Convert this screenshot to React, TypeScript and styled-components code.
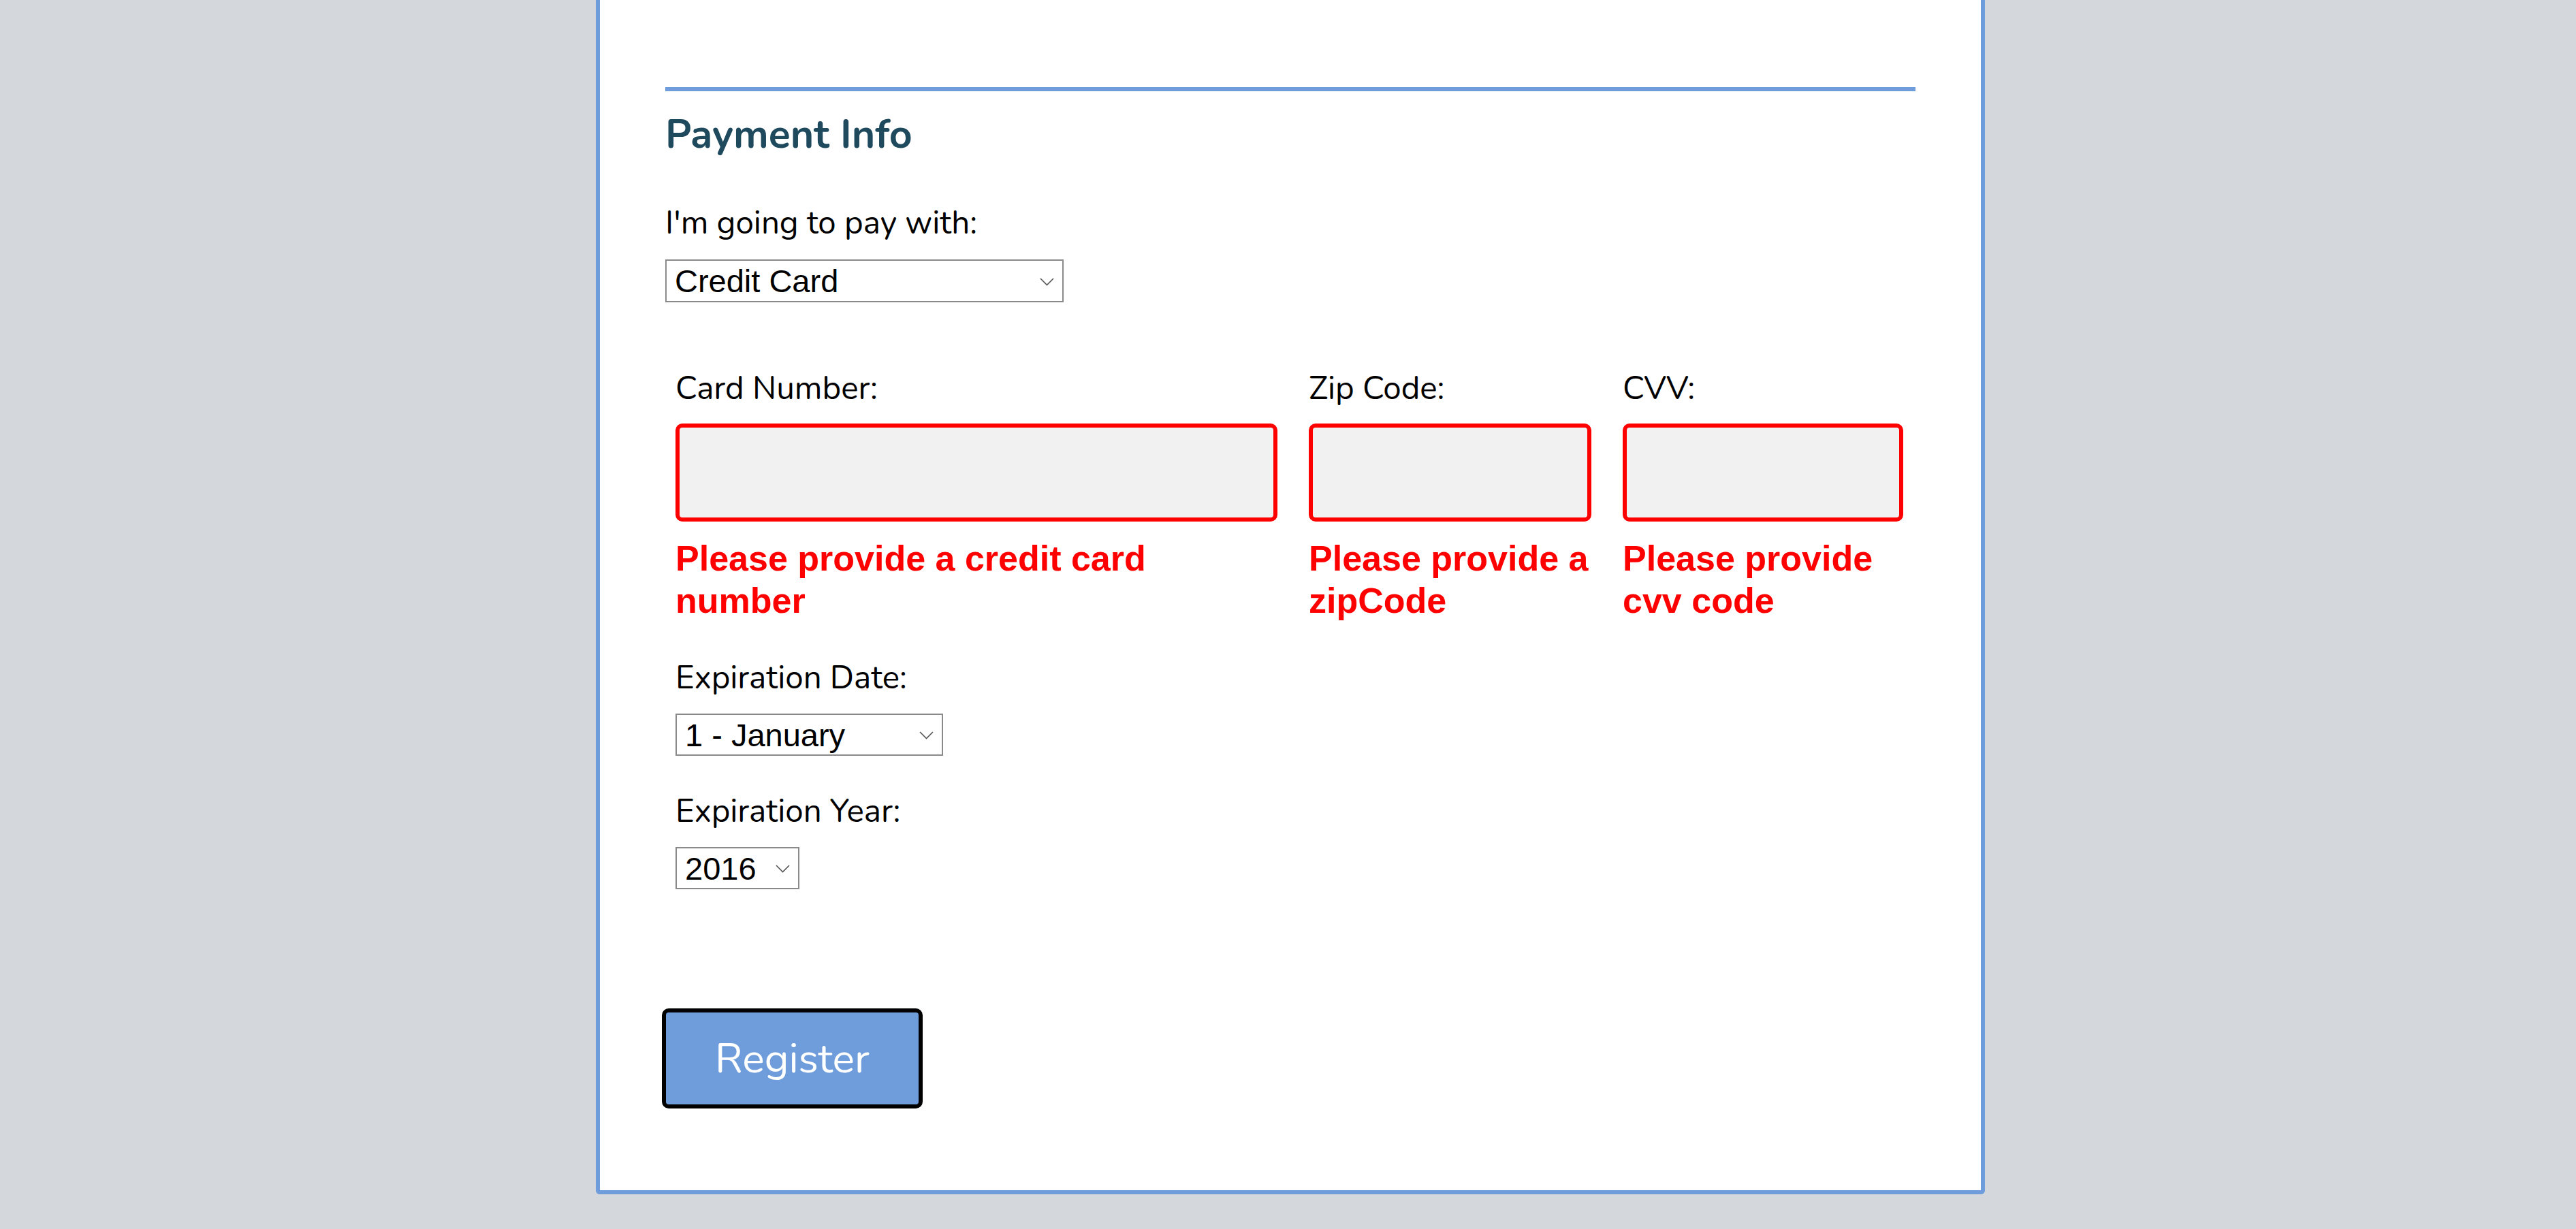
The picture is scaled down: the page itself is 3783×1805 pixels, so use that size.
import React from "react";
import styled, { createGlobalStyle } from "styled-components";

const GlobalStyle = createGlobalStyle`
  html, body {
    margin: 0;
    padding: 0;
    background: #d4d7dc;
  }
  body {
    font-family: "Nunito", Lato, "Liberation Sans", sans-serif;
    color: #000;
  }
  * { box-sizing: border-box; }
`;

const Page = styled.div`
  min-height: 100vh;
  display: flex;
  justify-content: center;
  align-items: flex-start;
  padding-left: 7px;
  background: #d4d7dc;
`;

const Card = styled.form`
  width: 2040px;
  background: #fff;
  border: 6px solid #6f9ddb;
  border-top: none;
  border-radius: 0 0 6px 6px;
  padding: 128px 96px 120px;
`;

const Section = styled.section`
  border-top: 6px solid #6f9ddb;
  display: flex;
  flex-direction: column;
  align-items: flex-start;
`;

const Title = styled.h2`
  margin: 31px 0 0;
  font-size: 59px;
  line-height: 66px;
  font-weight: 700;
  color: #1f4a5e;
`;

const Field = styled.div<{ $mt?: number; $gap?: number }>`
  display: flex;
  flex-direction: column;
  align-items: flex-start;
  margin-top: ${(p) => p.$mt ?? 0}px;
  gap: ${(p) => p.$gap ?? 26}px;
`;

const Label = styled.label`
  font-size: 47.5px;
  line-height: 53px;
  font-weight: 400;
  color: #000;
`;

const SelectBox = styled.div<{ $w: number; $h: number }>`
  position: relative;
  width: ${(p) => p.$w}px;
  height: ${(p) => p.$h}px;
`;

const Select = styled.select`
  appearance: none;
  -webkit-appearance: none;
  width: 100%;
  height: 100%;
  margin: 0;
  border: 2px solid #8a8a8a;
  border-radius: 0;
  background: #fff;
  padding: 0 0 0 12px;
  font-family: "Liberation Sans", Arial, sans-serif;
  font-size: 47px;
  color: #000;
  outline: none;
`;

const Chevron = styled.svg`
  position: absolute;
  right: 14px;
  top: 50%;
  width: 21px;
  height: 12px;
  margin-top: -5px;
  pointer-events: none;
`;

const CardRow = styled.div`
  align-self: stretch;
  margin-top: 100px;
  padding: 0 15px;
  display: grid;
  grid-template-columns: 884px 415px 412px;
  column-gap: 46px;
  align-items: start;
`;

const Column = styled.div`
  display: flex;
  flex-direction: column;
  align-items: stretch;
`;

const TextInput = styled.input`
  margin-top: 25px;
  height: 144px;
  width: 100%;
  border: 6px solid #ff0000;
  border-radius: 10px;
  background: #f1f1f1;
  outline: none;
  font-size: 44px;
  padding: 0 16px;
`;

const ErrorText = styled.div`
  margin-top: 23px;
  font-family: "Liberation Sans", Arial, sans-serif;
  font-weight: 700;
  font-size: 52px;
  line-height: 62px;
  color: #ff0000;
`;

const Expiry = styled.div`
  margin-top: 56px;
  padding-left: 15px;
  display: flex;
  flex-direction: column;
  align-items: flex-start;
`;

const Button = styled.button`
  margin-top: 175px;
  margin-left: -5px;
  width: 383px;
  height: 147px;
  border: 6px solid #000;
  border-radius: 10px;
  background: #6f9ddb;
  color: #fff;
  font-family: "Nunito", Lato, sans-serif;
  font-size: 61px;
  font-weight: 400;
  cursor: pointer;
`;

const ChevronIcon = () => (
  <Chevron viewBox="0 0 21 12">
    <polyline points="1,1 10.5,10.5 20,1" fill="none" stroke="#555" strokeWidth="1.6" />
  </Chevron>
);

const Dropdown: React.FC<{ w: number; h: number; value: string; options: string[] }> = ({
  w,
  h,
  value,
  options,
}) => (
  <SelectBox $w={w} $h={h}>
    <Select defaultValue={value}>
      {options.map((o) => (
        <option key={o}>{o}</option>
      ))}
    </Select>
    <ChevronIcon />
  </SelectBox>
);

const months = [
  "1 - January",
  "2 - February",
  "3 - March",
  "4 - April",
  "5 - May",
  "6 - June",
  "7 - July",
  "8 - August",
  "9 - September",
  "10 - October",
  "11 - November",
  "12 - December",
];

const years = ["2016", "2017", "2018", "2019", "2020"];

const cardFields = [
  { label: "Card Number:", error: "Please provide a credit card number" },
  { label: "Zip Code:", error: "Please provide a zipCode" },
  { label: "CVV:", error: "Please provide cvv code" },
];

export default function App() {
  return (
    <>
      <GlobalStyle />
      <Page>
        <Card onSubmit={(e) => e.preventDefault()}>
          <Section>
            <Title>Payment Info</Title>
            <Field $mt={70} $gap={27}>
              <Label>I'm going to pay with:</Label>
              <Dropdown w={585} h={63} value="Credit Card" options={["Credit Card", "PayPal", "Bitcoin"]} />
            </Field>
            <CardRow>
              {cardFields.map((f) => (
                <Column key={f.label}>
                  <Label>{f.label}</Label>
                  <TextInput type="text" />
                  <ErrorText>{f.error}</ErrorText>
                </Column>
              ))}
            </CardRow>
            <Expiry>
              <Field>
                <Label>Expiration Date:</Label>
                <Dropdown w={393} h={62} value="1 - January" options={months} />
              </Field>
              <Field $mt={55}>
                <Label>Expiration Year:</Label>
                <Dropdown w={182} h={62} value="2016" options={years} />
              </Field>
            </Expiry>
            <Button type="submit">Register</Button>
          </Section>
        </Card>
      </Page>
    </>
  );
}
